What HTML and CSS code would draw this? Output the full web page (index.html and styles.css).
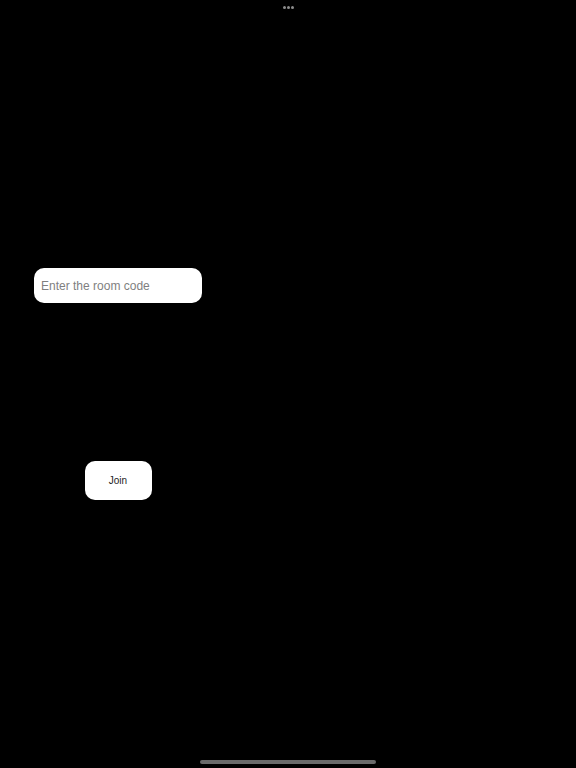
FILE: index.html
```html
<!DOCTYPE html>
<html>
<head>
<meta charset="utf-8">
<link rel="stylesheet" href="styles.css">
</head>
<body>
<div class="screen">
  <div class="topbar">
    <span class="dot"></span><span class="dot"></span><span class="dot"></span>
  </div>
  <div class="form">
    <div class="input"><span class="placeholder">Enter the room code</span></div>
    <div class="button">Join</div>
  </div>
  <div class="spacer"></div>
  <div class="homebar"><span class="indicator"></span></div>
</div>
</body>
</html>
```

FILE: styles.css
```css
html, body {
  margin: 0;
  padding: 0;
  background: #000;
}
.screen {
  width: 576px;
  height: 768px;
  display: flex;
  flex-direction: column;
  font-family: "Liberation Sans", Arial, sans-serif;
}
.topbar {
  height: 15px;
  display: flex;
  justify-content: center;
  align-items: center;
  gap: 1px;
  padding-left: 0;
}
.dot {
  width: 3px;
  height: 3px;
  border-radius: 50%;
  background: #8c8c8c;
}
.form {
  margin-top: 253px;
  margin-left: 34px;
  width: 168px;
  display: flex;
  flex-direction: column;
  align-items: center;
}
.input {
  box-sizing: border-box;
  width: 168px;
  height: 35px;
  background: #fff;
  border-radius: 10px;
  padding-left: 7px;
  display: flex;
  align-items: center;
  align-self: stretch;
}
.placeholder {
  font-size: 12px;
  color: #7f7f7f;
}
.button {
  margin-top: 158px;
  width: 67px;
  height: 39px;
  background: #fff;
  border-radius: 10px;
  display: flex;
  align-items: center;
  justify-content: center;
  font-size: 10px;
  color: #222;
}
.spacer {
  flex: 1;
}
.homebar {
  height: 8px;
  display: flex;
  justify-content: center;
  align-items: flex-start;
}
.indicator {
  width: 176px;
  height: 4px;
  border-radius: 2px;
  background: #6a6a6a;
}
```
